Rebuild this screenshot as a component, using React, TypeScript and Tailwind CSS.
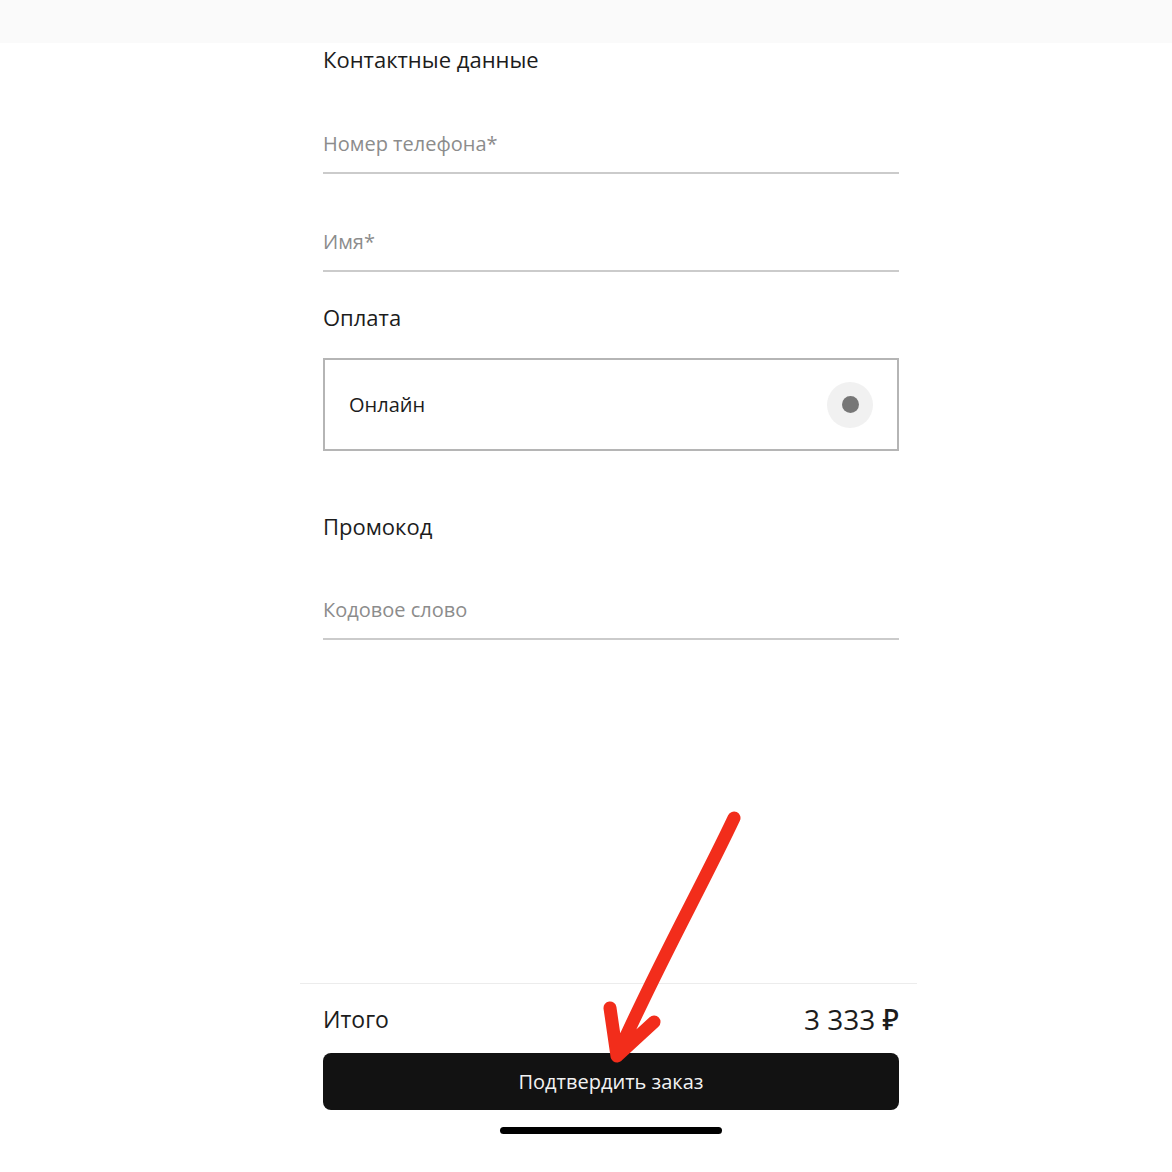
export default function App() {
  return (
    <div
      className="relative flex min-h-[1172px] w-full flex-col bg-white text-[#1c1c1c]"
      style={{ fontFamily: '"Open Sans", "Noto Sans", sans-serif' }}
    >
      <div className="h-[43px] w-full bg-[#fafafa]" />

      <div className="ml-[323px] w-[576px]">
        <h2 className="mt-[2px] text-[22px] leading-[28px] font-medium">Контактные данные</h2>

        <div className="mt-[58px] border-b-2 border-[#cbcbcb] pb-[15px] text-[20px] leading-[26px] text-[#8c8c8c]">
          Номер телефона*
        </div>
        <div className="mt-[55px] border-b-2 border-[#cbcbcb] pb-[15px] text-[20px] leading-[26px] text-[#8c8c8c]">
          Имя*
        </div>

        <h2 className="mt-[31px] text-[22px] leading-[28px] font-medium">Оплата</h2>

        <div className="mt-[27px] flex h-[93px] items-center justify-between border-2 border-[#b5b5b5] pr-[24px] pl-[24px]">
          <span className="text-[20px] leading-[26px]">Онлайн</span>
          <span className="flex h-[46px] w-[46px] items-center justify-center rounded-full bg-[#f1f1f1]">
            <span className="h-[17px] w-[17px] rounded-full bg-[#777777]" />
          </span>
        </div>

        <h2 className="mt-[61px] text-[22px] leading-[28px] font-medium">Промокод</h2>

        <div className="mt-[57px] border-b-2 border-[#cbcbcb] pb-[15px] text-[20px] leading-[26px] text-[#8c8c8c]">
          Кодовое слово
        </div>
      </div>

      <div className="mt-auto ml-[300px] w-[617px] border-t border-[#ececec] pr-[18px] pl-[23px]">
        <div className="mt-[19px] flex items-center justify-between">
          <span className="text-[23px] leading-[28px]">Итого</span>
          <span className="text-[28px] leading-[32px] font-medium">3 333 ₽</span>
        </div>
        <button className="mt-[18px] flex h-[57px] w-full items-center justify-center rounded-[8px] bg-[#121212] text-[20px] text-[#f2f2f2]">
          Подтвердить заказ
        </button>
        <div className="mx-auto mt-[17px] mb-[38px] h-[7px] w-[222px] rounded-full bg-black" />
      </div>

      <svg
        className="pointer-events-none absolute top-0 left-0"
        width="1172"
        height="1172"
        viewBox="0 0 1172 1172"
      >
        <path
          d="M734 818 C700 890 660 960 617 1056 M610 1008 L617 1056 L654 1022"
          fill="none"
          stroke="#f22d1b"
          strokeWidth="13"
          strokeLinecap="round"
          strokeLinejoin="round"
        />
      </svg>
    </div>
  )
}
